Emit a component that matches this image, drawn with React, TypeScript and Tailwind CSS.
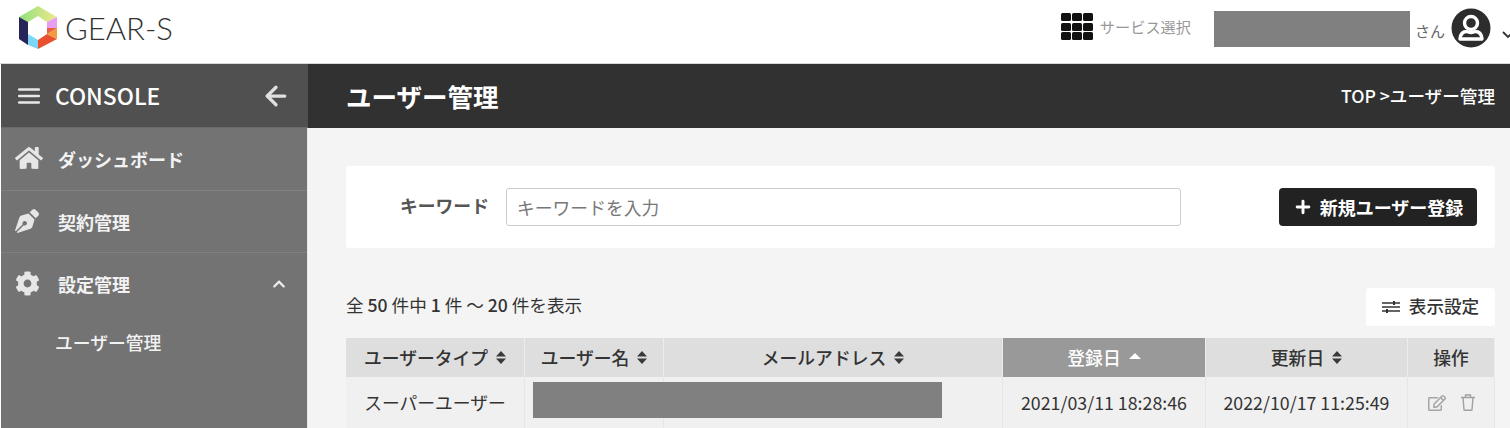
import { FaHome, FaPenNib, FaCog, FaChevronUp, FaRegEdit } from "react-icons/fa";
import { FiArrowLeft, FiMenu, FiPlus } from "react-icons/fi";

const cjk = { fontFamily: '"Noto Sans CJK JP","Noto Sans",sans-serif' };

function Logo() {
  return (
    <svg width="40" height="44" viewBox="0 0 40 44" className="shrink-0">
      <defs>
        <linearGradient id="topg" x1="0" x2="1" y1="0" y2="0">
          <stop offset="0" stopColor="#8fe07c" />
          <stop offset="1" stopColor="#f0e88c" />
        </linearGradient>
      </defs>
      <polygon points="20,0 39,11 29,16 20,10 10,16 1,11" fill="url(#topg)" />
      <polygon points="1,11 10,16 10,28 10,39 1,33" fill="#25255a" />
      <polygon points="10,28 20,34 20,43 10,39" fill="#7dd6f6" />
      <polygon points="20,34 29,28 39,33 20,43" fill="#e9502f" />
      <polygon points="29,28 39,22 39,33" fill="#f59a3c" />
      <polygon points="29,16 39,11 39,22 29,22" fill="#e79df0" />
      <polygon points="29,22 39,22 29,28" fill="#e9603f" />
    </svg>
  );
}

function Grid() {
  return (
    <div className="grid grid-cols-3 gap-[1.5px] w-[32px]">
      {Array.from({ length: 9 }).map((_, i) => (
        <div key={i} className="h-[8px] rounded-[1.5px] bg-[#111]" />
      ))}
    </div>
  );
}

function UserIcon() {
  return (
    <svg width="40" height="40" viewBox="0 0 40 40" className="shrink-0">
      <circle cx="20" cy="20" r="19.5" fill="#2d2d2d" />
      <circle cx="20" cy="15" r="6.5" fill="none" stroke="#fff" strokeWidth="3.4" />
      <path d="M9 31 C9.5 25 13 23.5 16 23.5 C18 25 22 25 24 23.5 C27 23.5 30.5 25 31 31 Z" fill="none" stroke="#fff" strokeWidth="3.4" strokeLinejoin="round" />
    </svg>
  );
}

function Sort({ color = "#3a3a3a" }: { color?: string }) {
  return (
    <svg width="10" height="15" viewBox="0 0 10 15" className="shrink-0">
      <path d="M5 1 L10 6.5 H0 Z M5 14 L0 8.5 H10 Z" fill={color} />
    </svg>
  );
}

function Th({ w, children, active }: { w: string; children: React.ReactNode; active?: boolean }) {
  return (
    <div
      className={`${w} ${active ? "bg-[#999999] text-white" : "bg-[#dedede] text-[#333]"} h-[39px] shrink-0 flex items-center justify-center gap-2 text-[17.8px] font-medium border-r border-[#ececec]`}
    >
      {children}
    </div>
  );
}

function Td({ w, children }: { w: string; children?: React.ReactNode }) {
  return (
    <div className={`${w} h-[51px] shrink-0 flex items-center justify-center text-[17.8px] text-[#333] border-r border-[#e6e6e6] bg-[#f0f0f0]`}>
      {children}
    </div>
  );
}

function NavItem({ icon, label, trailing, h, border = true }: { icon: React.ReactNode; label: string; trailing?: React.ReactNode; h: string; border?: boolean }) {
  return (
    <div className={`${h} flex items-center pl-[14px] pr-[21px] ${border ? "border-b border-[#808080]" : ""}`}>
      <div className="w-[43px] flex items-center text-[#e6e6e6] -mt-[2px]">{icon}</div>
      <span className="text-[18px] font-bold text-[#f2f2f2] flex-1 mt-[1px]">{label}</span>
      {trailing}
    </div>
  );
}

export default function App() {
  return (
    <div className="w-[1510px] h-[428px] overflow-hidden bg-white flex flex-col" style={cjk}>
      <header className="h-[63px] shrink-0 bg-white flex items-center pl-[18px] pb-[7px] overflow-hidden">
        <Logo />
        <span className="ml-[7px] text-[31px] font-light text-[#333]" style={{ fontFamily: '"Lato","Noto Sans",sans-serif' }}>GEAR-S</span>
        <div className="ml-auto flex items-center gap-[7px] -mt-[3px]">
          <Grid />
          <span className="text-[15.2px] text-[#999]">サービス選択</span>
        </div>
        <div className="ml-[23px] w-[196px] h-[36px] bg-[#808080] mt-[1px]" />
        <span className="ml-[5px] text-[15px] text-[#666] leading-none mt-[4px]">さん</span>
        <div className="ml-[6px] shrink-0"><UserIcon /></div>
        <svg width="12" height="9" viewBox="0 0 12 9" className="ml-[11px] -mr-[4px] mt-[12px] shrink-0"><path d="M1 2 L6 7 L11 2" fill="none" stroke="#333" strokeWidth="1.8" /></svg>
      </header>

      <div className="flex-1 flex min-h-0 border-t border-[#d8d8d8]">
        <aside className="w-[308px] shrink-0 pl-[1px] flex flex-col bg-white">
          <div className="h-[64px] shrink-0 bg-[#505050] flex items-center pl-[15px] pr-[17px] border-b border-[#6a6a6a]">
            <FiMenu size={26} color="#e8e8e8" strokeWidth={2.4} />
            <span className="ml-[13px] flex-1 text-[22.8px] font-medium text-white mt-[1px]">CONSOLE</span>
            <FiArrowLeft size={30} color="#e0e0e0" strokeWidth={2.6} />
          </div>
          <div className="flex-1 bg-[#737373] border-r border-[#e8e8e8]">
            <NavItem h="h-[63px]" icon={<FaHome size={28} />} label="ダッシュボード" />
            <NavItem h="h-[62px]" icon={<FaPenNib size={24} />} label="契約管理" />
            <NavItem h="h-[62px]" icon={<FaCog size={25} />} label="設定管理" border={false} trailing={<FaChevronUp size={14} color="#eee" />} />
            <div className="pl-[54px] pt-[14px] text-[17.8px] font-medium text-[#f2f2f2]">ユーザー管理</div>
          </div>
        </aside>

        <main className="flex-1 min-w-0 flex flex-col bg-[#f4f4f4]">
          <div className="h-[64px] shrink-0 bg-[#313131] flex items-center justify-between pl-[38px] pr-[15px]">
            <h1 className="text-[25.5px] font-bold text-white">ユーザー管理</h1>
            <span className="text-[17.6px] font-medium text-white">TOP &gt;ユーザー管理</span>
          </div>

          <div className="pl-[38px] pr-[15px] pt-[38px]">
            <div className="h-[82px] bg-white rounded-[3px] flex items-center pl-[54px] pr-[18px]">
              <span className="text-[17.8px] font-bold text-[#555] w-[106px] -mt-[3px]">キーワード</span>
              <div className="w-[675px] h-[38px] border border-[#ccc] rounded-[3px] bg-white flex items-center pl-[10px] text-[17.8px] text-[#777]">キーワードを入力</div>
              <button className="ml-auto w-[198px] h-[38px] bg-[#222] rounded-[4px] flex items-center justify-center gap-[7px] text-white text-[18px] font-bold">
                <FiPlus size={20} strokeWidth={3.5} />新規ユーザー登録
              </button>
            </div>

            <div className="flex items-center justify-between h-[38px] mt-[40px]">
              <span className="text-[17.6px] text-[#333] -mt-[4px]">全 <b className="font-medium">50</b> 件中 <b className="font-medium">1</b> 件 ～ <b className="font-medium">20</b> 件を表示</span>
              <button className="w-[129px] h-[38px] bg-white rounded-[3px] flex items-center justify-center gap-[9px] text-[17.6px] font-medium text-[#333]">
                <svg width="18" height="14" viewBox="0 0 18 14"><path d="M0 3 H18 M0 7 H18 M0 11 H18" stroke="#333" strokeWidth="1.7" /><path d="M12 1 V5 M5 9 V13" stroke="#333" strokeWidth="2" /></svg>
                <span className="-mt-[2px]">表示設定</span>
              </button>
            </div>

            <div className="relative mt-[12px]">
              <div className="flex">
                <Th w="w-[179px]">ユーザータイプ<Sort /></Th>
                <Th w="w-[139px]">ユーザー名<Sort /></Th>
                <Th w="w-[339px]">メールアドレス<Sort /></Th>
                <Th w="w-[203px]" active>登録日<svg width="12" height="6" viewBox="0 0 12 6" className="mb-[3px]"><path d="M6 0 L12 6 H0 Z" fill="#fff" /></svg></Th>
                <Th w="w-[202px]">更新日<Sort /></Th>
                <Th w="w-[87px]">操作</Th>
              </div>
              <div className="flex">
                <Td w="w-[179px]">スーパーユーザー</Td>
                <Td w="w-[139px]" />
                <Td w="w-[339px]" />
                <Td w="w-[203px]">2021/03/11 18:28:46</Td>
                <Td w="w-[202px]">2022/10/17 11:25:49</Td>
                <Td w="w-[87px]">
                  <div className="flex items-center gap-[15px] text-[#a5a5a5]">
                    <FaRegEdit size={18} />
                    <svg width="14" height="17" viewBox="0 0 14 17" fill="none" stroke="#a0a0a0" strokeWidth="1.4"><path d="M0 3.5 H14 M4.5 3.5 V1 H9.5 V3.5 M2 3.5 L3 15.5 Q3 16.3 4 16.3 H10 Q11 16.3 11 15.5 L12 3.5" /></svg>
                  </div>
                </Td>
              </div>
              <div className="absolute left-[187px] top-[44px] w-[409px] h-[36px] bg-[#808080]" />
            </div>
          </div>
        </main>
      </div>
    </div>
  );
}
